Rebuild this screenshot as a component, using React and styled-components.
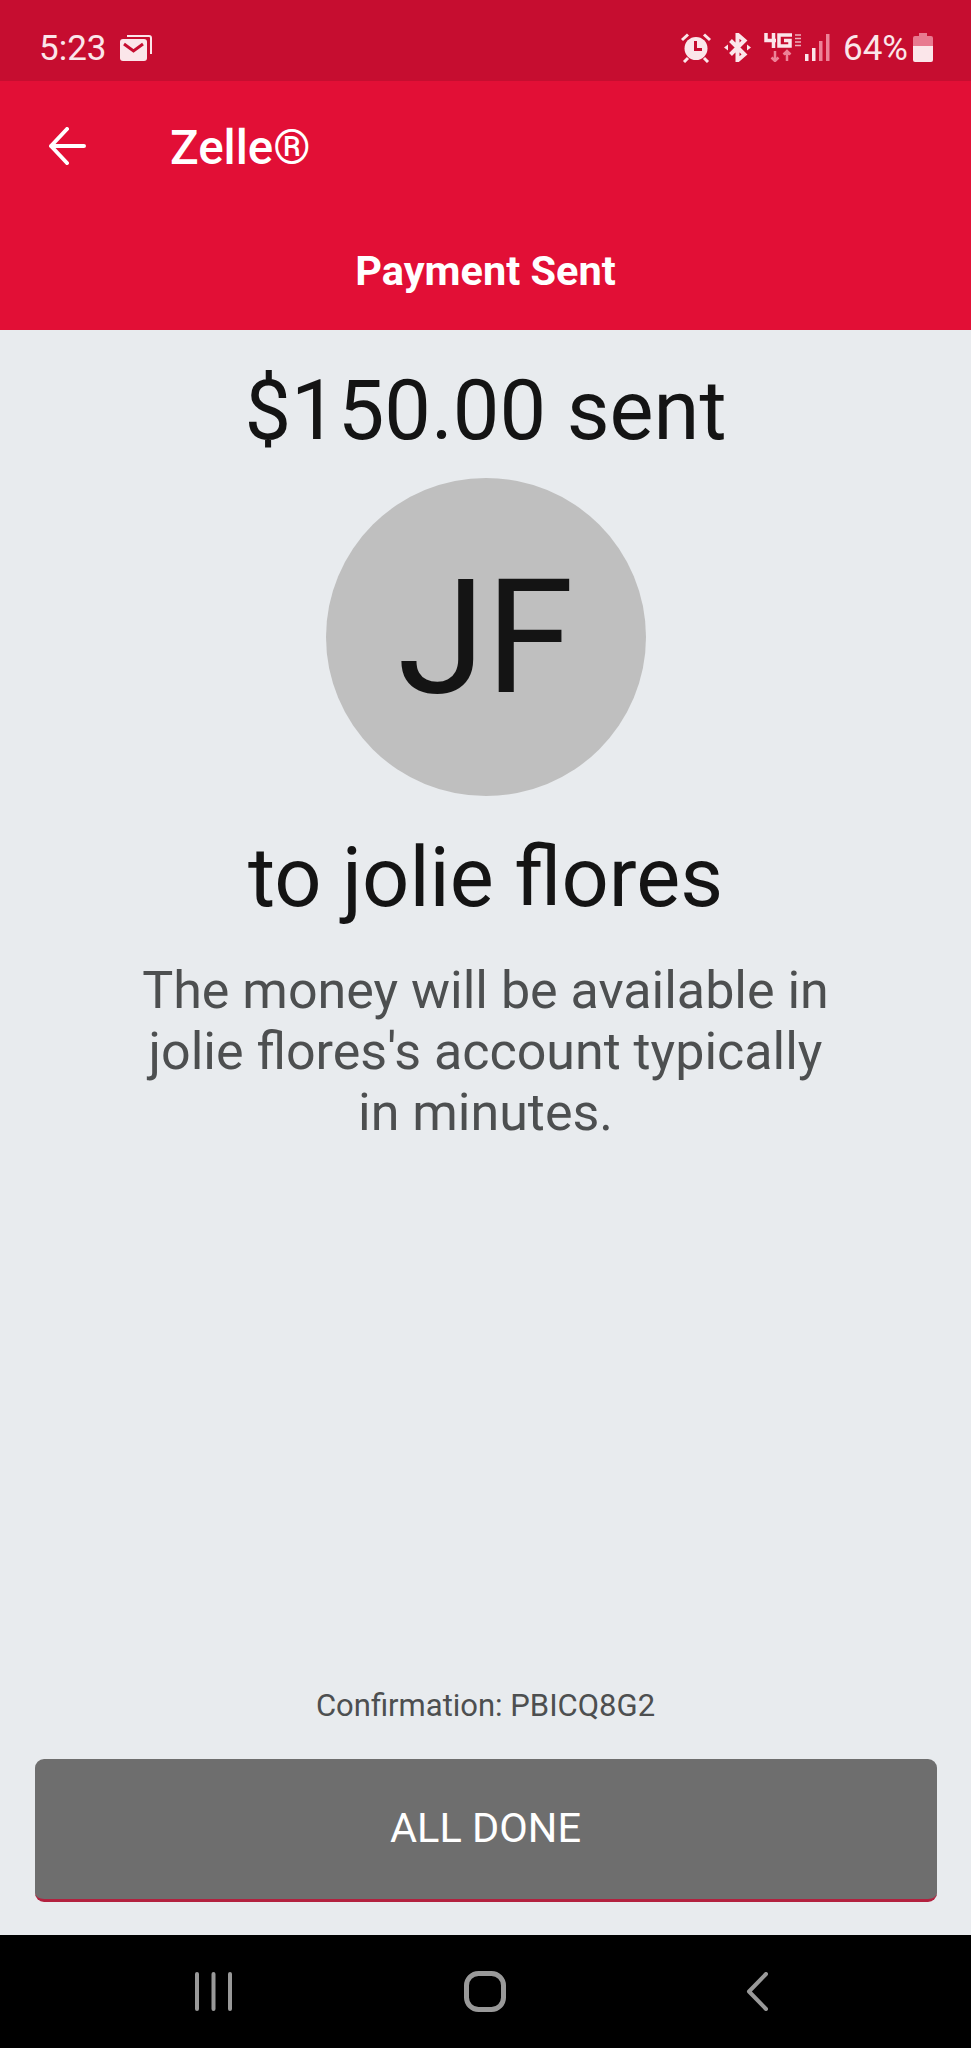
import React from "react";
import styled, { createGlobalStyle } from "styled-components";

const Global = createGlobalStyle`
  html, body { margin: 0; padding: 0; background: #e8ebee; }
  * { box-sizing: border-box; }
`;

const Screen = styled.div`
  width: 971px;
  height: 2048px;
  display: flex;
  flex-direction: column;
  overflow: hidden;
  background: #e8ebee;
  font-family: Roboto, "Liberation Sans", sans-serif;
`;

const StatusBar = styled.div`
  height: 81px;
  flex: none;
  background: #c60d30;
  color: #fbe6ea;
  display: flex;
  align-items: center;
  justify-content: space-between;
  padding: 14px 38px 0 39px;
`;

const StatusGroup = styled.div`
  display: flex;
  align-items: center;
  gap: ${(p) => p.$gap}px;
`;

const StatusText = styled.span`
  font-size: 35px;
  line-height: 40px;
  margin-top: 3px;
`;

const Header = styled.header`
  height: 249px;
  flex: none;
  background: #e20f36;
  color: #fff;
  display: flex;
  flex-direction: column;
`;

const TitleRow = styled.div`
  height: 134px;
  flex: none;
  display: flex;
  align-items: center;
  padding: 0 0 4px 48px;
  gap: 84px;
`;

const Title = styled.h1`
  margin: 4px 0 0;
  font-size: 47.5px;
  font-weight: 500;
  line-height: 52px;
`;

const SubTitle = styled.div`
  margin-top: 33px;
  font-size: 41.5px;
  font-weight: 700;
  line-height: 46px;
  text-align: center;
`;

const Main = styled.main`
  flex: 1;
  display: flex;
  flex-direction: column;
  align-items: center;
  color: #141414;
`;

const Amount = styled.div`
  margin-top: 36px;
  font-size: 83px;
  line-height: 90px;
`;

const Avatar = styled.div`
  margin-top: 22px;
  width: 320px;
  height: 318px;
  border-radius: 50%;
  background: #bfbfbf;
  display: flex;
  align-items: center;
  justify-content: center;
  font-size: 160px;
`;

const Recipient = styled.div`
  margin-top: 36px;
  font-size: 83px;
  line-height: 92px;
`;

const Message = styled.p`
  margin: 36px 0 0;
  width: 700px;
  text-align: center;
  font-size: 52px;
  line-height: 61px;
  color: #4d4f50;
`;

const Confirmation = styled.div`
  margin-top: auto;
  font-size: 31px;
  line-height: 36px;
  color: #4d4f50;
`;

const DoneButton = styled.button`
  margin: 35px 0 33px;
  width: 902px;
  height: 143px;
  flex: none;
  border: 0;
  border-bottom: 3px solid #b3213f;
  border-radius: 9px;
  background: #6e6e6e;
  color: #fff;
  font-family: inherit;
  font-size: 41.5px;
  padding: 0 0 3px;
`;

const NavBar = styled.nav`
  height: 113px;
  flex: none;
  background: #000;
  display: flex;
  align-items: center;
  gap: 232px;
  padding: 0 0 0 195px;
`;

const NavBackSlot = styled.span`
  display: flex;
  margin-left: 8px;
`;

const AlarmIcon = () => (
  <svg width="32" height="30" viewBox="0 0 32 30" fill="none">
    <circle cx="16" cy="15.5" r="11.5" fill="#fbe6ea" />
    <path d="M15.5 8v8.500h6.500" stroke="#c60d30" strokeWidth="3" />
    <path d="M2 7l6-5.500M30 7l-6-5.500M8 25l-4 4M24 25l4 4" stroke="#fbe6ea" strokeWidth="3" />
  </svg>
);

const MailIcon = () => (
  <svg width="32" height="28" viewBox="0 0 32 28" fill="none">
    <path d="M7 2h22a2 2 0 0 1 2 2v16" stroke="#fbe6ea" strokeWidth="2" />
    <rect x="0" y="5" width="27" height="22" rx="3" fill="#fbe6ea" />
    <path d="M4 10l9.5 7L23 10" stroke="#c60d30" strokeWidth="3" />
  </svg>
);

const BluetoothIcon = () => (
  <svg width="27" height="29" viewBox="0 0 27 29" fill="none">
    <path d="M6.5 7.500l14 14-7 6V1.500l7 6-14 14" stroke="#fbe6ea" strokeWidth="4" />
    <path d="M0 14.500l4-3v6zM27 14.500l-4-3v6z" fill="#fbe6ea" />
  </svg>
);

const NetworkIcon = () => (
  <svg width="37" height="29" viewBox="0 0 37 29" fill="none">
    <path d="M2 0v7.500h10M9.500 0v15" stroke="#fbe6ea" strokeWidth="3.5" />
    <path d="M28 2H15v11h11V7.500h-6" stroke="#fbe6ea" strokeWidth="3.5" />
    <path d="M31 2h6M31 5.500h6M31 9h6M31 12.5h6" stroke="#fbe6ea" strokeWidth="1.500" opacity=".75" />
    <path d="M11 18v10M7.500 24.500L11 28l3.500-3.500M23 28V18M19.500 21.500L23 18l3.500 3.500" stroke="#ed8297" strokeWidth="2.5" />
  </svg>
);

const SignalIcon = () => (
  <svg width="25" height="27" viewBox="0 0 25 27">
    <rect x="0" y="20" width="3.5" height="7" fill="#fbe6ea" />
    <rect x="7" y="14" width="3.5" height="13" fill="#fbe6ea" />
    <rect x="14" y="7" width="3.5" height="20" fill="#ed8297" />
    <rect x="21" y="0" width="3.5" height="27" fill="#ed8297" />
  </svg>
);

const BatteryIcon = () => (
  <svg width="20" height="29" viewBox="0 0 20 29">
    <path d="M6 0h8v3h4a2 2 0 0 1 2 2v8H0V5a2 2 0 0 1 2-2h4z" fill="#e87a90" />
    <path d="M0 13h20v14a2 2 0 0 1-2 2H2a2 2 0 0 1-2-2z" fill="#fbe6ea" />
  </svg>
);

const BackArrow = () => (
  <svg width="38" height="38" viewBox="0 0 38 38" fill="none">
    <path d="M36 19H3M19 2L3 19l16 17" stroke="#fff" strokeWidth="4" strokeLinecap="round" strokeLinejoin="round" />
  </svg>
);

const RecentsIcon = () => (
  <svg width="37" height="39" viewBox="0 0 37 39" fill="none">
    <path d="M2 2v35M18.500 2v35M35 2v35" stroke="#999" strokeWidth="4" strokeLinecap="round" />
  </svg>
);

const HomeIcon = () => (
  <svg width="42" height="41" viewBox="0 0 42 41" fill="none">
    <rect x="2.5" y="2.5" width="37" height="36" rx="12" stroke="#999" strokeWidth="5" />
  </svg>
);

const BackIcon = () => (
  <svg width="22" height="39" viewBox="0 0 22 39" fill="none">
    <path d="M20 2L3 19.500 20 37" stroke="#999" strokeWidth="4" strokeLinecap="round" strokeLinejoin="round" />
  </svg>
);

export default function App() {
  return (
    <>
      <Global />
      <Screen>
        <StatusBar>
          <StatusGroup $gap={13}>
            <StatusText>5:23</StatusText>
            <MailIcon />
          </StatusGroup>
          <StatusGroup $gap={13}>
            <StatusGroup $gap={12}>
              <AlarmIcon />
              <BluetoothIcon />
            </StatusGroup>
            <StatusGroup $gap={4}>
              <NetworkIcon />
              <SignalIcon />
            </StatusGroup>
            <StatusGroup $gap={5}>
              <StatusText>64%</StatusText>
              <BatteryIcon />
            </StatusGroup>
          </StatusGroup>
        </StatusBar>
        <Header>
          <TitleRow>
            <BackArrow />
            <Title>Zelle®</Title>
          </TitleRow>
          <SubTitle>Payment Sent</SubTitle>
        </Header>
        <Main>
          <Amount>$150.00 sent</Amount>
          <Avatar>JF</Avatar>
          <Recipient>to jolie flores</Recipient>
          <Message>The money will be available in jolie flores's account typically in minutes.</Message>
          <Confirmation>Confirmation: PBICQ8G2</Confirmation>
          <DoneButton>ALL DONE</DoneButton>
        </Main>
        <NavBar>
          <RecentsIcon />
          <HomeIcon />
          <NavBackSlot>
            <BackIcon />
          </NavBackSlot>
        </NavBar>
      </Screen>
    </>
  );
}
